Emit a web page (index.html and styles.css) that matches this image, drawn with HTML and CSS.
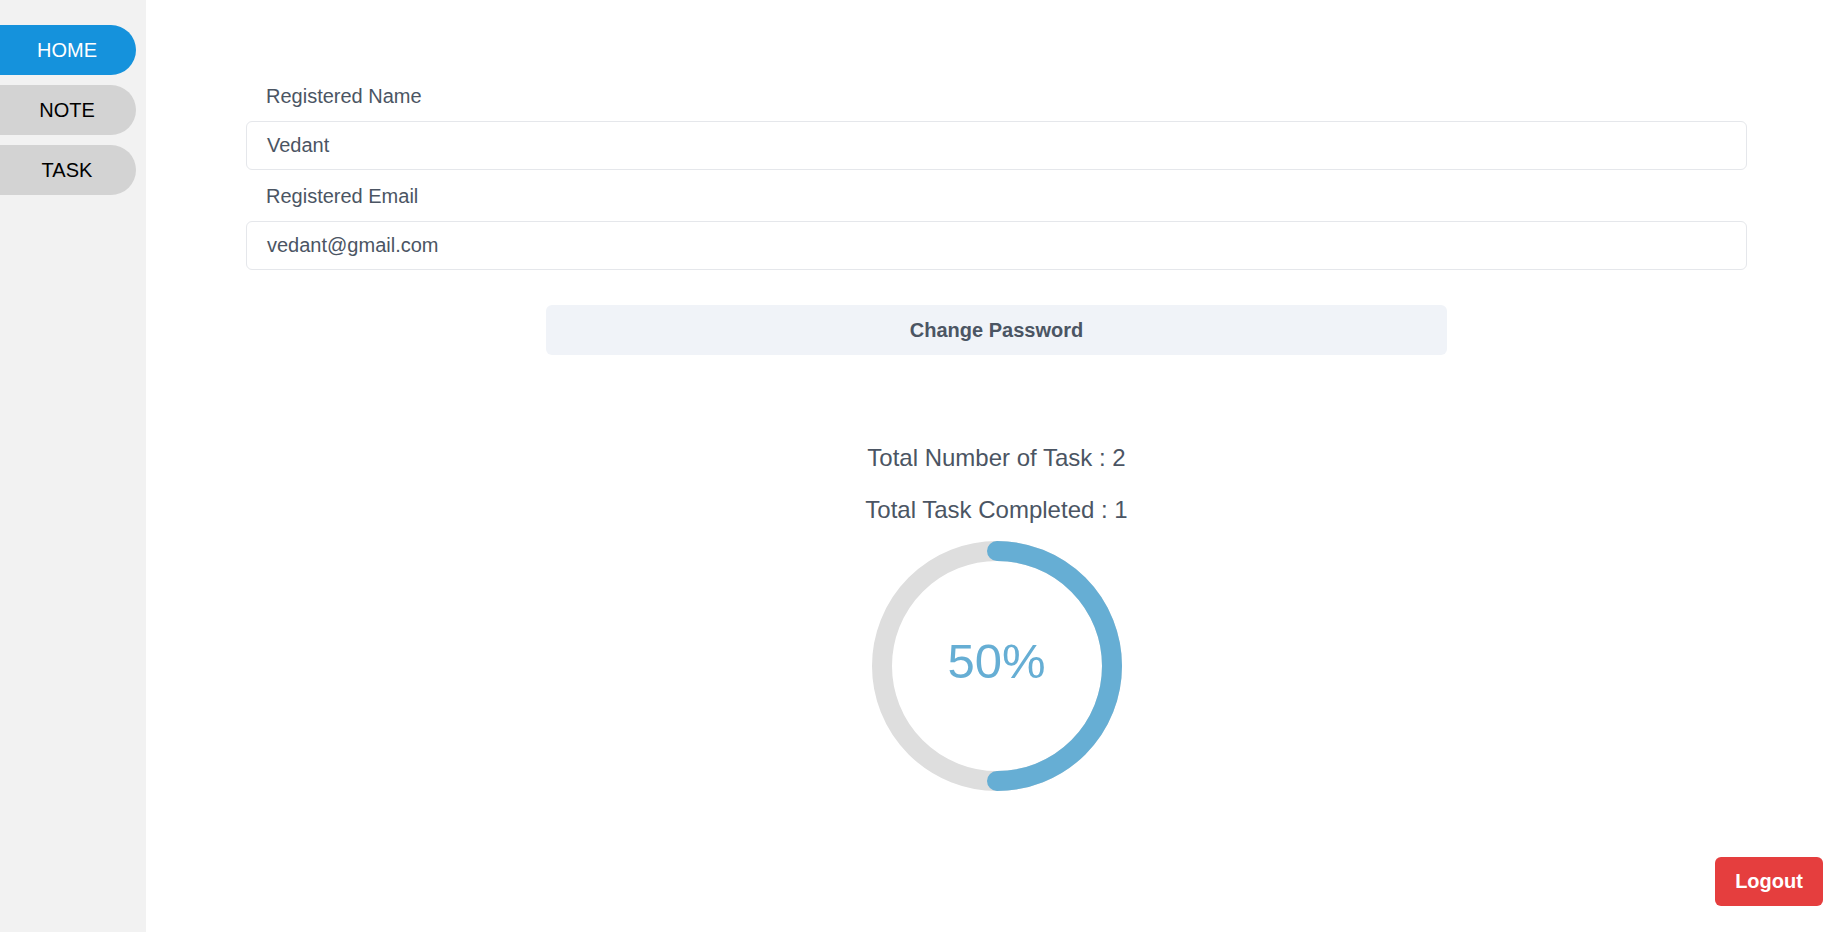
FILE: index.html
```html
<!DOCTYPE html>
<html>
<head>
<meta charset="utf-8">
<title>Home</title>
<link rel="stylesheet" href="styles.css">
</head>
<body>
<div class="layout">
  <nav class="sidebar">
    <a class="nav-btn active">HOME</a>
    <a class="nav-btn">NOTE</a>
    <a class="nav-btn">TASK</a>
  </nav>
  <main class="main">
    <div class="label">Registered Name</div>
    <div class="field">Vedant</div>
    <div class="label">Registered Email</div>
    <div class="field">vedant@gmail.com</div>
    <div class="btn-row">
      <button class="change-btn">Change Password</button>
    </div>
    <section class="stats">
      <div class="stat">Total Number of Task : 2</div>
      <div class="stat stat-2">Total Task Completed : 1</div>
      <div class="progress">
        <svg width="250" height="250" viewBox="0 0 250 250">
          <circle cx="125" cy="125" r="115" fill="none" stroke="#dedede" stroke-width="20"/>
          <path d="M125 10 A115 115 0 0 1 125 240" fill="none" stroke="#66aed4" stroke-width="20" stroke-linecap="round"/>
        </svg>
        <div class="progress-text">50%</div>
      </div>
    </section>
  </main>
</div>
<button class="logout">Logout</button>
</body>
</html>
```

FILE: styles.css
```css
* { box-sizing: border-box; }
html, body { margin: 0; padding: 0; height: 100%; }
body {
  font-family: "Liberation Sans", Arial, sans-serif;
  background: #ffffff;
  color: #4b5563;
}
.layout {
  display: flex;
  min-height: 932px;
}
.sidebar {
  width: 146px;
  flex-shrink: 0;
  background: #f2f2f2;
  padding-top: 25px;
  display: flex;
  flex-direction: column;
  gap: 10px;
}
.nav-btn {
  display: flex;
  align-items: center;
  justify-content: center;
  width: 136px;
  height: 50px;
  padding-right: 2px;
  border-radius: 0 25px 25px 0;
  background: #d3d3d3;
  color: #000000;
  font-size: 20px;
}
.nav-btn.active {
  background: #1592dc;
  color: #ffffff;
}
.main {
  flex: 1;
  padding: 70px 101px 0 100px;
}
.label {
  font-size: 20px;
  line-height: 28px;
  padding: 12px 20px 11px;
}
.field {
  height: 49px;
  border: 1px solid #e5e7eb;
  border-radius: 6px;
  padding: 0 20px;
  font-size: 20px;
  line-height: 47px;
}
.btn-row {
  display: flex;
  justify-content: center;
  margin-top: 35px;
}
.change-btn {
  width: 60%;
  height: 50px;
  border: none;
  border-radius: 6px;
  background: #f0f3f8;
  color: #4b5563;
  font-family: "Liberation Sans", Arial, sans-serif;
  font-weight: bold;
  font-size: 20px;
}
.stats {
  margin-top: 87px;
  display: flex;
  flex-direction: column;
  align-items: center;
}
.stat {
  font-size: 24px;
  line-height: 32px;
}
.stat-2 { margin-top: 20px; }
.progress {
  position: relative;
  width: 250px;
  height: 250px;
  margin-top: 15px;
}
.progress svg { display: block; }
.progress-text {
  position: absolute;
  left: 0;
  right: 0;
  top: 0;
  bottom: 10px;
  display: flex;
  align-items: center;
  justify-content: center;
  font-size: 49px;
  color: #66aed4;
}
.logout {
  position: fixed;
  right: 25px;
  bottom: 26px;
  width: 108px;
  height: 49px;
  border: none;
  border-radius: 6px;
  background: #e53e3e;
  color: #ffffff;
  font-family: "Liberation Sans", Arial, sans-serif;
  font-weight: bold;
  font-size: 20px;
}
```
